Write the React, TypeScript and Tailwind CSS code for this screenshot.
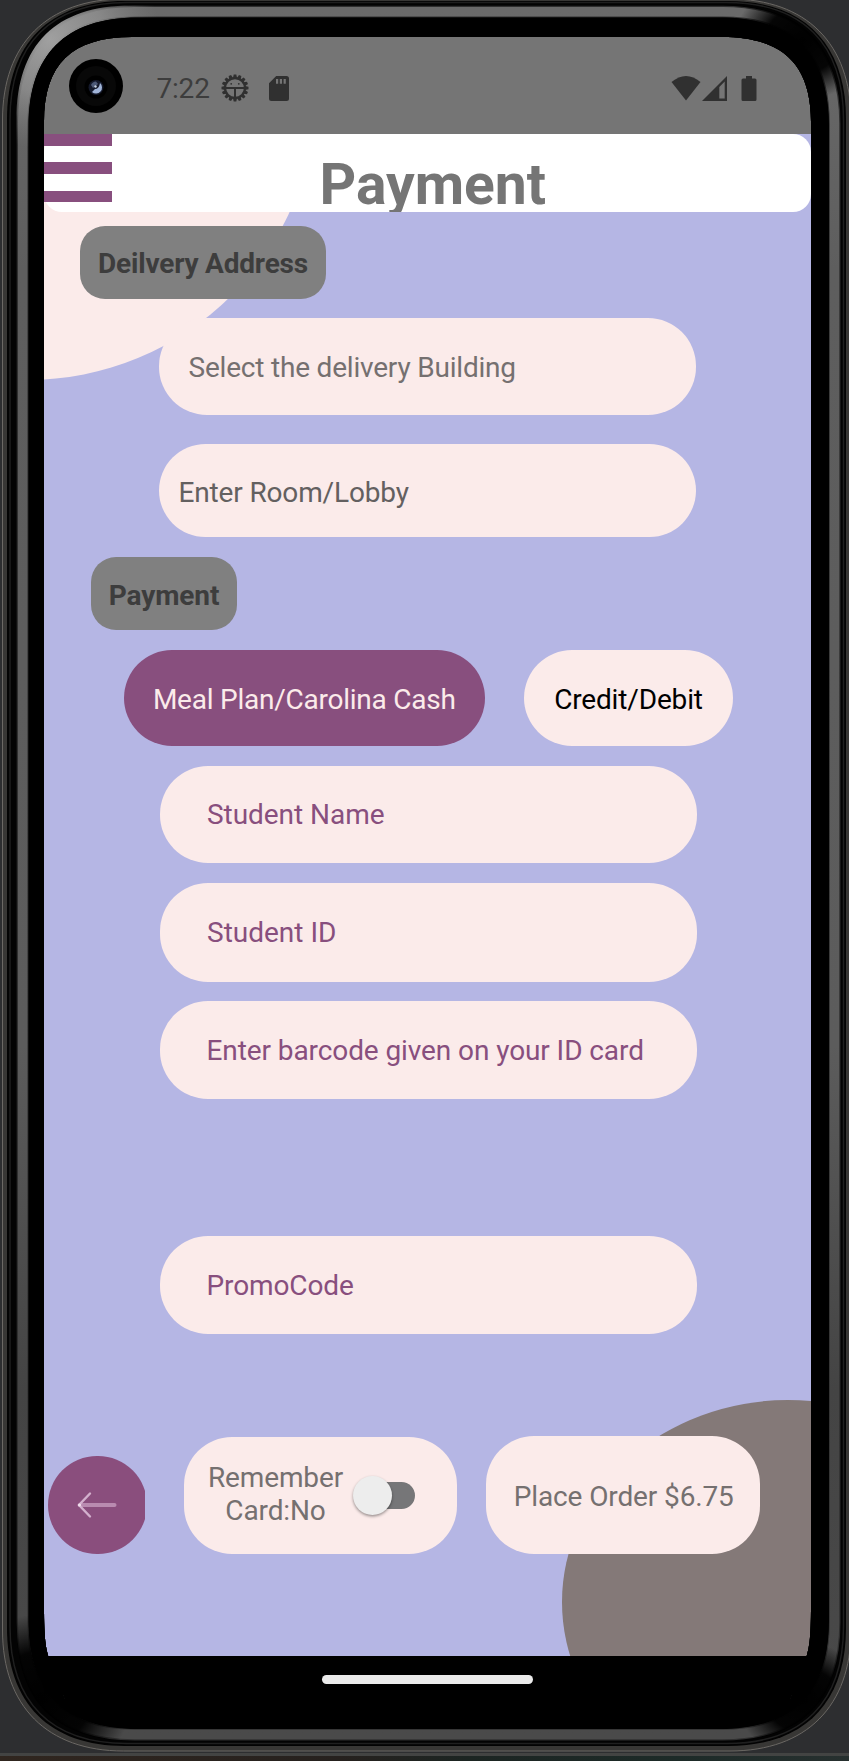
import type { ReactNode } from "react";

const SCREEN =
  "M44 122 C44 64 72 37 132 37 H722 C782 37 811 64 811 122 V1606 C811 1640 809 1648 806.5 1657 L790 1700 H65 L48.5 1657 C46 1648 44 1640 44 1606 Z";

function ring(x0: number, y0: number, x1: number, y1: number, r: number, c: number) {
  const k = r * c;
  return `M${x0} ${y0 + r} C${x0} ${y0 + k} ${x0 + k} ${y0} ${x0 + r} ${y0} H${x1 - r} C${x1 - k} ${y0} ${x1} ${y0 + k} ${x1} ${y0 + r} V${y1 - r} C${x1} ${y1 - k} ${x1 - k} ${y1} ${x1 - r} ${y1} H${x0 + r} C${x0 + k} ${y1} ${x0} ${y1 - k} ${x0} ${y1 - r} Z`;
}

/* Phone hardware: everything around the display. */
function DeviceFrame() {
  return (
    <svg className="pointer-events-none absolute inset-0" width="849" height="1761" viewBox="0 0 849 1761" fill="none">
      <defs>
        <clipPath id="around">
          <path d={`M-10 -10 H870 V1770 H-10 Z ${SCREEN}`} clipRule="evenodd" />
        </clipPath>
        <clipPath id="band">
          <path d={`${ring(16.5, 5.5, 840.5, 1740.5, 115, 0.34)} ${ring(28.5, 17.5, 829, 1729, 109, 0.34)}`} clipRule="evenodd" />
        </clipPath>
        <linearGradient id="metal" x1="0" y1="0" x2="0" y2="1">
          <stop offset="0" stopColor="#6a6a6a" />
          <stop offset="0.15" stopColor="#5e5e5e" />
          <stop offset="0.6" stopColor="#5c5c5c" />
          <stop offset="0.8" stopColor="#444444" />
          <stop offset="1" stopColor="#4a4a4a" />
        </linearGradient>
        <radialGradient id="shade">
          <stop offset="0" stopColor="#000" />
          <stop offset="0.55" stopColor="#000" stopOpacity="0.95" />
          <stop offset="1" stopColor="#000" stopOpacity="0" />
        </radialGradient>
        <radialGradient id="shine">
          <stop offset="0" stopColor="#a0a0a0" />
          <stop offset="0.5" stopColor="#909090" stopOpacity="0.8" />
          <stop offset="1" stopColor="#808080" stopOpacity="0" />
        </radialGradient>
        <linearGradient id="desk" x1="0" y1="0" x2="1" y2="0">
          <stop offset="0" stopColor="#30261f" />
          <stop offset="0.4" stopColor="#26211e" />
          <stop offset="0.55" stopColor="#1c2522" />
          <stop offset="0.8" stopColor="#1d2b28" />
          <stop offset="1" stopColor="#27302f" />
        </linearGradient>
      </defs>
      <g clipPath="url(#around)">
        <rect width="849" height="1761" fill="#2d2e30" />
        <rect y="1753" width="849" height="3" fill="#434443" />
        <rect y="1756" width="849" height="5" fill="url(#desk)" />
        <path d={ring(2.5, -1, 851, 1751, 121, 0.37)} fill="#383735" stroke="#6b6864" strokeWidth="1" />
        <path d={ring(7, 1, 846, 1746, 118, 0.36)} fill="#030303" />
        <path d={ring(10, 2.5, 843.5, 1743.5, 117, 0.35)} stroke="#1f1f1f" strokeWidth="1.5" />
        <path d={ring(17, 6, 840, 1740, 115, 0.34)} fill="#000" />
        <path d={ring(22.7, 11.8, 834.5, 1734.5, 112, 0.34)} stroke="#2f2f2f" strokeWidth="12" />
        <path d={ring(22.7, 11.8, 834.5, 1734.5, 112, 0.34)} stroke="url(#metal)" strokeWidth="9.5" />
        <g clipPath="url(#band)">
          <circle cx="50" cy="40" r="110" fill="url(#shine)" />
          <ellipse cx="803" cy="40" rx="68" ry="60" fill="url(#shade)" />
          <ellipse cx="803" cy="1700" rx="66" ry="58" fill="url(#shade)" />
          <ellipse cx="42" cy="1698" rx="90" ry="84" fill="url(#shade)" />
        </g>
        <path d={ring(28.5, 17.5, 829, 1729, 109, 0.34)} fill="#000" />
      </g>
    </svg>
  );
}

function BugIcon() {
  const teeth = Array.from({ length: 16 }, (_, i) => i * 22.5);
  return (
    <svg className="ml-[11px]" width="28" height="28" viewBox="-14 -14 28 28" fill="none">
      {teeth.map((a) => (
        <path key={a} d="M-2 -10 L-1.3 -13.5 H1.3 L2 -10 Z" fill="#303030" transform={`rotate(${a})`} />
      ))}
      <circle r="9.9" stroke="#303030" strokeWidth="2.1" />
      <path d="M-9.5 0 H9.5 M0 0 V9.5" stroke="#303030" strokeWidth="2" />
      <circle cx="-3.8" cy="-4.2" r="0.9" fill="#303030" />
      <circle cx="3.8" cy="-4.2" r="0.9" fill="#303030" />
    </svg>
  );
}

function StatusBar() {
  return (
    <div className="flex h-[97px] items-start bg-[#757575]">
      <div className="mt-[22px] ml-[25px] flex size-[54px] items-center justify-center rounded-full bg-black">
        <svg width="42" height="42" viewBox="-21 -21 42 42">
          <circle r="20" fill="#080808" />
          <circle cx="0" cy="1" r="11.5" fill="#000" />
          <circle cx="0" cy="1.5" r="7.5" fill="#151a2c" />
          <path d="M-5 -1 A6 6 0 0 1 0 -4.5 L2 -2 L-3 2 Z" fill="#4d5a78" />
          <path d="M4 -3 A6 6 0 0 1 -4 6 L-1 3 Q3 3 4 -3 Z" fill="#a0b4d8" />
          <circle cx="-0.5" cy="0.5" r="1.2" fill="#c9d4e5" />
        </svg>
      </div>
      <div className="mt-[35px] flex h-[32px] grow items-center">
        <span className="mt-[2px] ml-[33.5px] text-[28px] leading-[32px] font-normal tracking-[-0.2px] text-[#3d3d3d]">7:22</span>
        <BugIcon />
        <svg className="ml-[20px]" width="20" height="25" viewBox="0 0 20 25">
          <path fillRule="evenodd" fill="#303030" d="M7.2 0 H17.5 Q20 0 20 2.5 V22.5 Q20 25 17.5 25 H2.5 Q0 25 0 22.5 V7.3 Z M7 3 V7.8 H9.2 V3 Z M10.8 3 V7.8 H13 V3 Z M14.6 3 V7.8 H16.8 V3 Z" />
        </svg>
        <div className="mr-[54.5px] ml-auto flex items-center">
          <svg width="30" height="25" viewBox="0 0 30 25">
            <path d="M0.5 6 Q15 -6 29.5 6 L15 24.5 Z" fill="#303030" />
          </svg>
          <svg className="ml-[1.5px]" width="25" height="25" viewBox="0 0 25 25">
            <path fillRule="evenodd" fill="#303030" d="M25 0 V25 H0 Z M17.3 11 V22.5 H22.7 V5.5 Z" />
          </svg>
          <svg className="ml-[13.5px]" width="16" height="25" viewBox="0 0 16 25">
            <path d="M5 0 H11 V2.5 H14 Q15.5 2.5 15.5 4 V23.5 Q15.5 25 14 25 H2 Q0.5 25 0.5 23.5 V4 Q0.5 2.5 2 2.5 H5 Z" fill="#303030" />
          </svg>
        </div>
      </div>
    </div>
  );
}

function Header() {
  return (
    <header className="relative flex h-[78px] shrink-0 items-start overflow-hidden">
      <div className="flex h-full w-full items-start overflow-hidden rounded-[18px] bg-white">
        <h1 className="mt-[18px] ml-[275.5px] text-[57px] leading-[66px] font-bold text-[#757575]">Payment</h1>
      </div>
      <button aria-label="Menu" className="absolute top-0 left-0 flex h-[68px] w-[68px] flex-col justify-between">
        <span className="h-[11.5px] w-full bg-[#884f7e]" />
        <span className="h-[11.5px] w-full bg-[#884f7e]" />
        <span className="h-[11.5px] w-full bg-[#884f7e]" />
      </button>
    </header>
  );
}

function Pill({ className, children }: { className: string; children: ReactNode }) {
  return (
    <div className={`flex shrink-0 items-center rounded-[48px] bg-[#fbebea] whitespace-nowrap ${className}`}>
      {children}
    </div>
  );
}

function Chip({ className, children }: { className: string; children: ReactNode }) {
  return (
    <div className={`flex shrink-0 items-center justify-center rounded-[25px] bg-[#808080] pt-[3px] font-bold whitespace-nowrap text-[#3d3d3d] ${className}`}>
      {children}
    </div>
  );
}

export default function App() {
  return (
    <div className="relative h-[1761px] w-[849px] overflow-hidden bg-black pt-[37px] pl-[44px] font-['Roboto',sans-serif] text-[28px] leading-[33px]">
      <div className="w-[767px]">
        <StatusBar />
        <main className="relative flex h-[1522px] flex-col overflow-hidden bg-[#b5b6e4]">
          <div className="absolute -top-[331px] -left-[305.5px] size-[577px] rounded-full bg-[#fbebea]" />
          <div className="absolute top-[1266px] left-[518px] h-[404px] w-[452px] rounded-[50%] bg-[#847978]" />
          <div className="relative flex flex-col">
            <Header />
            <Chip className="mt-[13.5px] ml-[36px] h-[73.5px] w-[246px] tracking-[-0.2px]">Deilvery Address</Chip>
            <Pill className="mt-[19px] ml-[115px] h-[97px] w-[537px] pt-[2px] pl-[29.5px] tracking-[-0.2px] text-[#757070]">
              Select the delivery Building
            </Pill>
            <Pill className="mt-[29px] ml-[115px] h-[93px] w-[537px] pt-[3px] pl-[19.5px] tracking-[-0.15px] text-[#636060]">
              Enter Room/Lobby
            </Pill>
            <Chip className="mt-[20px] ml-[47px] h-[73px] w-[146px] tracking-[-0.1px]">Payment</Chip>
            <div className="mt-[19.5px] ml-[79.5px] flex">
              <button className="flex h-[96.5px] w-[361.5px] items-center justify-center rounded-[48px] bg-[#884f7e] pt-[3px] tracking-[-0.24px] whitespace-nowrap text-[#fbebea]">
                Meal Plan/Carolina Cash
              </button>
              <button className="ml-[39px] flex h-[96.5px] w-[209px] items-center justify-center rounded-[48px] bg-[#fbebea] pt-[3px] tracking-[-0.15px] whitespace-nowrap text-black">
                Credit/Debit
              </button>
            </div>
            <Pill className="mt-[19.5px] ml-[116px] h-[97.5px] w-[537px] pl-[47px] tracking-[-0.05px] text-[#884f7e]">Student Name</Pill>
            <Pill className="mt-[20px] ml-[116px] h-[98.5px] w-[537px] pl-[47px] text-[#884f7e]">Student ID</Pill>
            <Pill className="mt-[19.5px] ml-[116px] h-[98px] w-[537px] pl-[46.5px] tracking-[-0.09px] text-[#884f7e]">
              Enter barcode given on your ID card
            </Pill>
            <Pill className="mt-[137px] ml-[116px] h-[97.5px] w-[537px] pt-px pl-[46.5px] tracking-[-0.12px] text-[#884f7e]">PromoCode</Pill>
            <div className="mt-[102.5px] flex items-start">
              <button aria-label="Back" className="mt-[20px] ml-[3.5px] h-[98px] w-[97.5px] overflow-hidden">
                <div className="flex h-[98px] w-[99px] items-center justify-center rounded-full bg-[#8a4e7d]">
                  <svg width="40" height="28" viewBox="0 0 40 28" fill="none" strokeLinecap="round">
                    <path d="M3 14 H37.5" stroke="#b98bb0" strokeWidth="4" />
                    <path d="M13 2.5 L2 14 L13 25.5" stroke="#d3b0cd" strokeWidth="2.4" />
                    <circle cx="2.5" cy="14" r="1.6" fill="#f0dcec" />
                  </svg>
                </div>
              </button>
              <Pill className="mt-[1px] ml-[39px] h-[117px] w-[273px] rounded-[47px] pl-[22.5px] text-[#757070]">
                <span className="-mt-[3px] w-[138px] text-center leading-[33px] tracking-[-0.12px]">
                  Remember
                  <br />
                  Card:No
                </span>
                <span role="switch" aria-checked="false" className="relative ml-[19px] h-[27px] w-[51px] rounded-full bg-[#767678]">
                  <span className="absolute -top-[6px] -left-[10.5px] size-[39px] rounded-full bg-[#ededed] shadow-[0_1.5px_3px_rgba(0,0,0,0.4)]" />
                </span>
              </Pill>
              <Pill className="ml-[29px] h-[118px] w-[274px] justify-center rounded-[48px] pt-[2px] pl-[1.5px] tracking-[-0.12px] text-[#757070]">
                Place Order $6.75
              </Pill>
            </div>
          </div>
        </main>
      </div>
      <DeviceFrame />
      <div className="absolute top-[1656px] left-[44px] flex h-[38px] w-[767px] items-end justify-center bg-black">
        <div className="mb-[10px] h-[9px] w-[210.5px] rounded-full bg-[#ebebeb]" />
      </div>
    </div>
  );
}
